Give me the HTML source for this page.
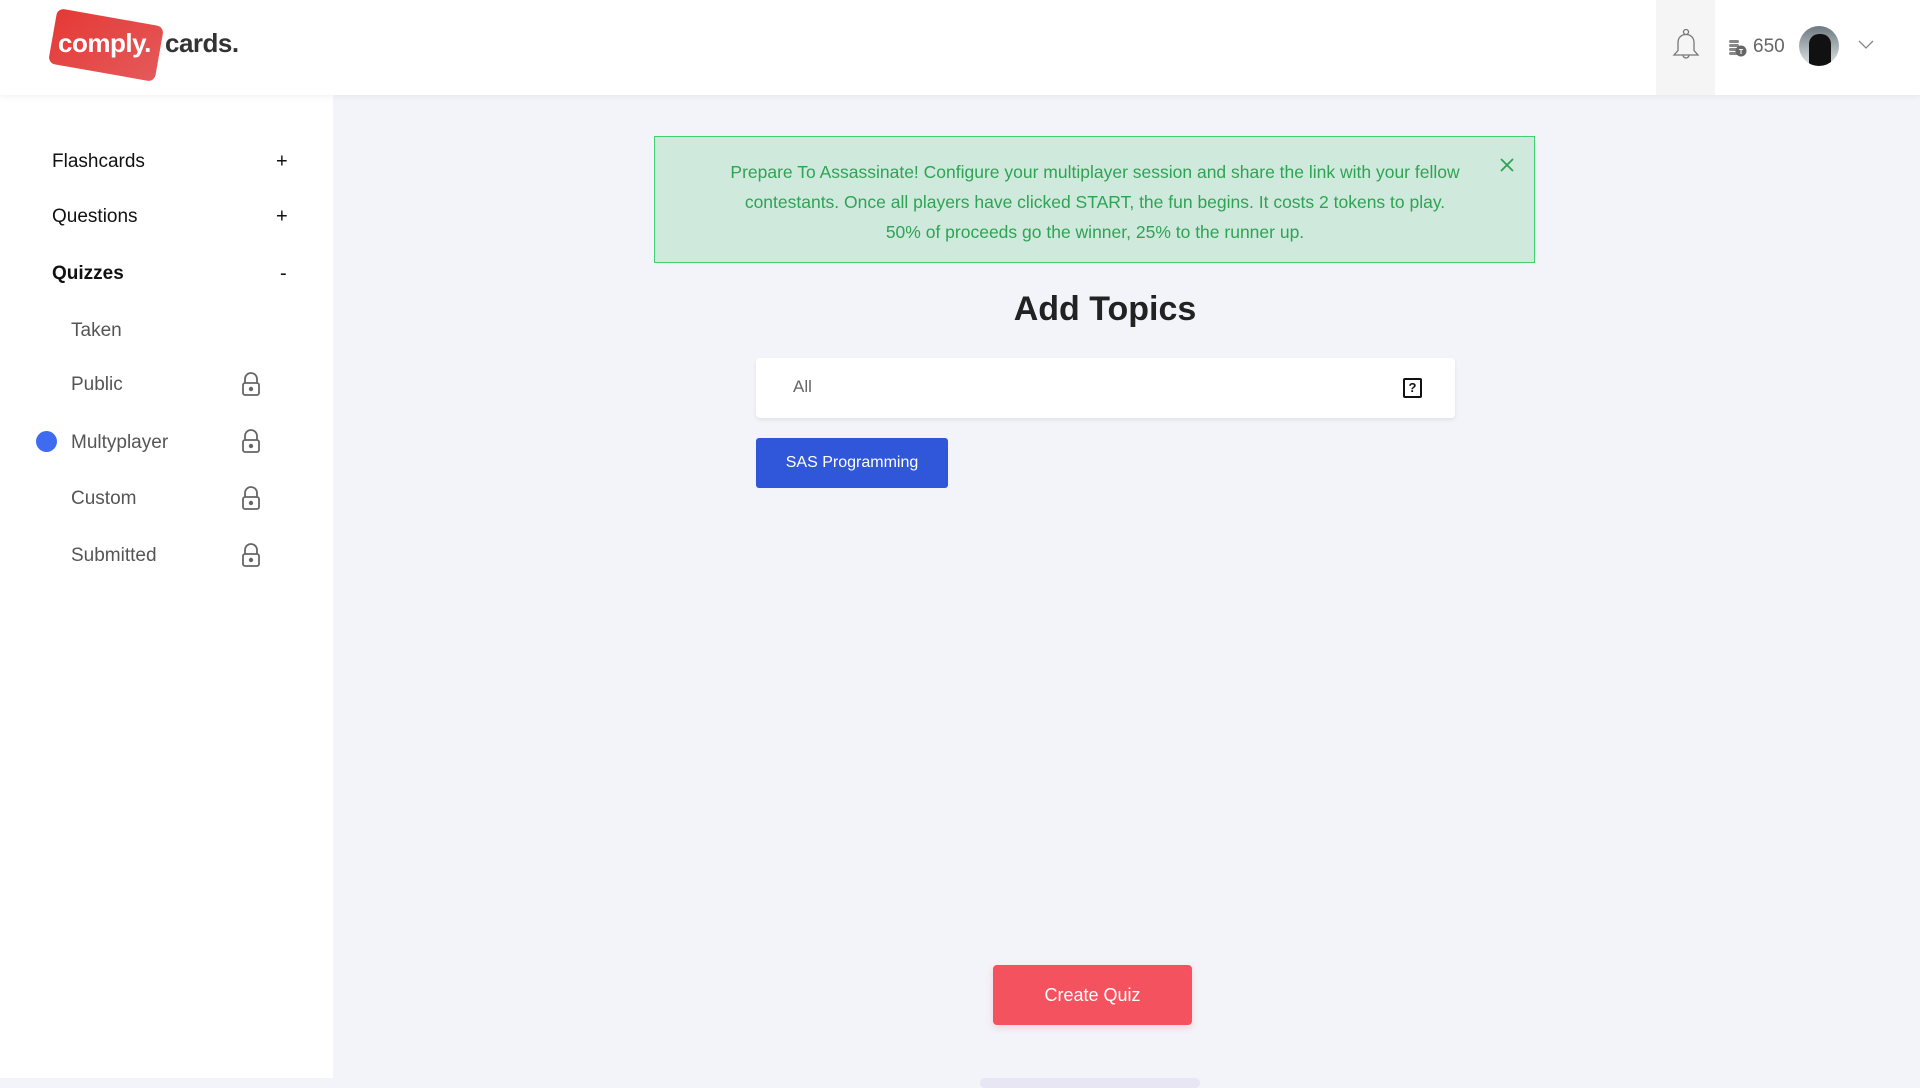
<!DOCTYPE html>
<html><head><meta charset="utf-8"><style>
*{box-sizing:border-box;margin:0;padding:0}
body{width:1920px;height:1080px;background:#f3f4f9;font-family:"Liberation Sans",sans-serif;position:relative;overflow:hidden;color:#111}
.hdr{position:absolute;left:0;top:0;width:1920px;height:95px;background:#fff;box-shadow:0 2px 6px rgba(0,0,0,.05);z-index:2}
.side{position:absolute;left:0;top:95px;width:333px;height:983px;background:#fff}
.abs{position:absolute}
.nav{position:absolute;left:52px;font-size:19px;color:#111;transform:translateY(-50%)}
.sub{position:absolute;left:71px;font-size:19px;color:#555;transform:translateY(-50%)}
.pm{position:absolute;left:276px;font-size:20px;transform:translateY(-50%)}
.lock{position:absolute;left:241px}
</style></head><body>
<div class="hdr">
  <div class="abs" style="left:52px;top:17px;width:108px;height:56px;background:linear-gradient(135deg,#e53935,#e45a5a);border-radius:7px;transform:rotate(10deg)"></div>
  <div class="abs" style="left:58px;top:28px;color:#fff;font-weight:bold;font-size:26px;letter-spacing:-0.5px">comply.</div>
  <div class="abs" style="left:165px;top:28px;color:#333;font-weight:bold;font-size:26px;letter-spacing:-0.5px">cards.</div>
  <div class="abs" style="left:1656px;top:0;width:59px;height:95px;background:#f5f5f5"></div>
  <svg class="abs" style="left:1671px;top:28px" width="30" height="34" viewBox="0 0 30 34" fill="none" stroke="#777" stroke-width="1.3"><circle cx="15" cy="4" r="2.5"/><path d="M15 6.5c-5 0-8 3.5-8 8v8l-4 4.5h24l-4-4.5v-8c0-4.5-3-8-8-8z"/><path d="M12 27a3 3 0 0 0 6 0"/></svg>
  <svg class="abs" style="left:1729px;top:39px" width="18" height="18" viewBox="0 0 18 18"><rect x="0" y="1" width="10" height="3" rx="1.5" fill="#888"/><rect x="0" y="5" width="10" height="3" rx="1.5" fill="#888"/><rect x="0" y="9" width="10" height="3" rx="1.5" fill="#888"/><rect x="0" y="13" width="10" height="3" rx="1.5" fill="#888"/><circle cx="12" cy="12" r="5.5" fill="#666"/><text x="12" y="15" font-size="7" fill="#fff" text-anchor="middle" font-family="Liberation Sans" font-weight="bold">T</text></svg>
  <div class="abs" style="left:1753px;top:36px;font-size:19px;color:#666">650</div>
  <div class="abs" style="left:1799px;top:26px;width:40px;height:40px;border-radius:50%;background:linear-gradient(#6d7a80,#dfe4e6);overflow:hidden"><div style="position:absolute;left:10px;top:8px;width:22px;height:40px;border-radius:10px 10px 0 0;background:#111"></div></div>
  <svg class="abs" style="left:1858px;top:40px" width="16" height="10" viewBox="0 0 16 10" fill="none" stroke="#888" stroke-width="1.3"><path d="M1 1l7 7 7-7"/></svg>
</div>
<div class="side">
</div>
<div class="nav" style="top:162px">Flashcards</div><div class="pm" style="top:162px">+</div>
<div class="nav" style="top:217px">Questions</div><div class="pm" style="top:217px">+</div>
<div class="nav" style="top:274px;font-weight:bold">Quizzes</div><div class="pm" style="top:274px;left:280px">-</div>
<div class="sub" style="top:331px">Taken</div>
<div class="sub" style="top:385px">Public</div>
<div class="sub" style="top:443px">Multyplayer</div>
<div class="sub" style="top:499px">Custom</div>
<div class="sub" style="top:556px">Submitted</div>
<div class="abs" style="left:36px;top:431px;width:21px;height:21px;border-radius:50%;background:#3e6bf0"></div>
<svg class="lock" style="top:372px" width="20" height="25" viewBox="0 0 20 25" fill="none" stroke="#666" stroke-width="1.8"><path d="M4 11V7a6 6 0 0 1 12 0v4"/><rect x="2" y="11" width="16" height="12" rx="2"/><circle cx="10" cy="17" r="1.3" fill="#666"/></svg>
<svg class="lock" style="top:429px" width="20" height="25" viewBox="0 0 20 25" fill="none" stroke="#666" stroke-width="1.8"><path d="M4 11V7a6 6 0 0 1 12 0v4"/><rect x="2" y="11" width="16" height="12" rx="2"/><circle cx="10" cy="17" r="1.3" fill="#666"/></svg>
<svg class="lock" style="top:486px" width="20" height="25" viewBox="0 0 20 25" fill="none" stroke="#666" stroke-width="1.8"><path d="M4 11V7a6 6 0 0 1 12 0v4"/><rect x="2" y="11" width="16" height="12" rx="2"/><circle cx="10" cy="17" r="1.3" fill="#666"/></svg>
<svg class="lock" style="top:543px" width="20" height="25" viewBox="0 0 20 25" fill="none" stroke="#666" stroke-width="1.8"><path d="M4 11V7a6 6 0 0 1 12 0v4"/><rect x="2" y="11" width="16" height="12" rx="2"/><circle cx="10" cy="17" r="1.3" fill="#666"/></svg>

<div class="abs" style="left:654px;top:136px;width:881px;height:127px;background:#cfeadd;border:1.5px solid #3fd06f;overflow:hidden">
  <div style="position:absolute;left:0;width:880px;top:20px;height:94px;overflow:hidden;text-align:center;color:#2ea353;font-size:17.5px;line-height:30px;white-space:nowrap">Prepare To Assassinate! Configure your multiplayer session and share the link with your fellow<br>contestants. Once all players have clicked START, the fun begins. It costs 2 tokens to play.<br>50% of proceeds go the winner, 25% to the runner up.</div>
  <svg style="position:absolute;left:844px;top:20px" width="16" height="16" viewBox="0 0 16 16" stroke="#2ea353" stroke-width="1.8"><path d="M2 2l12 12M14 2L2 14"/></svg>
</div>
<div class="abs" style="left:0;width:2210px;top:290px;text-align:center;font-size:34px;font-weight:bold;color:#222">Add Topics</div>
<div class="abs" style="left:756px;top:358px;width:699px;height:60px;background:#fff;border-radius:4px;box-shadow:0 2px 4px rgba(0,0,0,.08)">
  <div style="position:absolute;left:37px;top:19px;font-size:17px;color:#666">All</div>
  <div style="position:absolute;left:647px;top:20px;width:19px;height:20px;border:2px solid #111;border-radius:2px;font-size:13px;font-weight:bold;text-align:center;line-height:16px">?</div>
</div>
<div class="abs" style="left:756px;top:438px;width:192px;height:50px;background:#3057d9;border-radius:3px;color:#fff;font-size:16px;text-align:center;line-height:50px">SAS Programming</div>
<div class="abs" style="left:993px;top:965px;width:199px;height:60px;background:#f5525f;border-radius:4px;color:#fff;font-size:18px;text-align:center;line-height:60px;box-shadow:0 3px 8px rgba(245,82,95,.2)">Create Quiz</div>
<div class="abs" style="left:980px;top:1078px;width:220px;height:10px;border-radius:8px;background:#e8e5f5"></div>
</body></html>
